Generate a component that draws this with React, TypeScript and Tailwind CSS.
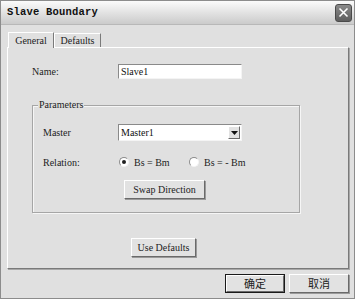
import React from 'react';

const ui = { fontFamily: '"Liberation Serif", "Noto Sans CJK SC", serif' };
const cjk = { fontFamily: '"Noto Sans CJK SC", sans-serif' };

const Radio: React.FC<{ checked?: boolean; label: string }> = ({ checked, label }) => (
  <div className="flex items-center">
    <span className="w-[10px] h-[10px] rounded-full bg-white border border-[#8c8c8c] border-r-[#f4f4f4] border-b-[#f4f4f4] flex items-center justify-center">
      {checked && <span className="w-[4px] h-[4px] rounded-full bg-[#202020]" />}
    </span>
    <span className="ml-[5px] text-[10px] text-[#222]">{label}</span>
  </div>
);

const Button: React.FC<{ className?: string; children: React.ReactNode }> = ({ className, children }) => (
  <div
    className={
      'flex items-center justify-center bg-[#e2e2e2] border border-white border-r-[#6a6a6a] border-b-[#6a6a6a] shadow-[1px_1px_0_#9a9a9a] text-[10px] text-[#222] ' +
      (className ?? '')
    }
  >
    {children}
  </div>
);

export default function App() {
  return (
    <div
      className="w-[355px] h-[299px] bg-[#e0e0e0] border border-[#8c8c8c] flex flex-col overflow-hidden"
      style={ui}
    >
      {/* title bar */}
      <div className="h-[24px] shrink-0 bg-gradient-to-b from-[#fbfbfb] to-[#cbcbcb] border-b border-[#b8b8b8] flex items-center justify-between pl-[6px] pr-[2px]">
        <span className="text-[10.5px] font-bold text-[#111] tracking-[0.2px]" style={{ fontFamily: '"Liberation Mono", monospace' }}>
          Slave Boundary
        </span>
        <div className="w-[17px] h-[18px] rounded-[3px] bg-gradient-to-b from-[#8a8a8a] to-[#5e5e5e] border border-[#4a4a4a] flex items-center justify-center">
          <svg width="11" height="11" viewBox="0 0 11 11">
            <path d="M1.5 1.5 L9.5 9.5 M9.5 1.5 L1.5 9.5" stroke="#fff" strokeWidth="1.6" />
          </svg>
        </div>
      </div>

      <div className="flex-1 flex flex-col pl-[6px] pr-[5px]">
        {/* tabs */}
        <div className="flex items-end h-[22px] pl-[1px]">
          <div className="h-[16px] w-[46px] border border-white border-r-[#7a7a7a] border-b-0 bg-[#e0e0e0] flex items-center justify-center text-[10px] text-[#222] relative z-10 mb-[-1px]">
            General
          </div>
          <div className="h-[14px] w-[47px] border border-white border-r-[#7a7a7a] border-b-0 flex items-center justify-center text-[10px] text-[#222]">
            Defaults
          </div>
        </div>

        {/* panel */}
        <div className="h-[222px] border border-white border-r-[#7a7a7a] border-b-[#7a7a7a] shadow-[1px_1px_0_#a8a8a8] flex flex-col">
          <div className="flex items-center mt-[16px] h-[15px] pl-[24px]">
            <span className="w-[86px] text-[10px] text-[#222]">Name:</span>
            <div className="w-[124px] h-[15px] bg-white border border-[#8a8a8a] border-r-[#f4f4f4] border-b-[#f4f4f4] flex items-center pl-[2px] text-[10px] text-[#111]">
              Slave1
            </div>
          </div>

          {/* group box */}
          <div className="relative mt-[26px] ml-[24px] w-[268px] h-[108px] border border-[#a6a6a6] shadow-[inset_1px_1px_0_#f6f6f6,1px_1px_0_#f6f6f6] flex flex-col">
            <span className="absolute left-[5px] top-[-8px] px-[1px] bg-[#e0e0e0] text-[10px] text-[#222] leading-[14px]">
              Parameters
            </span>
            <div className="flex items-center mt-[18px] h-[17px] pl-[10px]">
              <span className="w-[75px] text-[10px] text-[#222]">Master</span>
              <div className="w-[124px] h-[17px] bg-white border border-[#8a8a8a] border-r-[#f4f4f4] border-b-[#f4f4f4] flex items-center justify-between pl-[2px] pr-[1px] text-[10px] text-[#111]">
                <span>Master1</span>
                <div className="w-[12px] h-[13px] bg-[#e2e2e2] border border-white border-r-[#6a6a6a] border-b-[#6a6a6a] flex items-center justify-center">
                  <svg width="7" height="4" viewBox="0 0 7 4">
                    <path d="M0 0 H7 L3.5 4 Z" fill="#111" />
                  </svg>
                </div>
              </div>
            </div>
            <div className="flex items-center mt-[14px] h-[14px] pl-[10px]">
              <span className="w-[76px] text-[10px] text-[#222]">Relation:</span>
              <div className="w-[70px]">
                <Radio checked label="Bs = Bm" />
              </div>
              <Radio label="Bs = - Bm" />
            </div>
            <div className="pl-[91px] mt-[11px]">
              <Button className="w-[81px] h-[19px]">Swap Direction</Button>
            </div>
          </div>

          <div className="pl-[123px] mt-[25px]">
            <Button className="w-[65px] h-[19px]">Use Defaults</Button>
          </div>
        </div>

        {/* bottom buttons */}
        <div className="flex justify-end gap-[4px] mt-[5px]">
          <div className="w-[60px] h-[19px] border border-[#1a1a1a] flex">
            <div className="flex-1 flex items-center justify-center bg-[#e2e2e2] border border-white border-r-[#6a6a6a] border-b-[#6a6a6a] text-[11px] text-[#222]" style={cjk}>
              确定
            </div>
          </div>
          <Button className="w-[60px] h-[19px]">
            <span className="text-[11px]" style={cjk}>取消</span>
          </Button>
        </div>
      </div>
    </div>
  );
}
